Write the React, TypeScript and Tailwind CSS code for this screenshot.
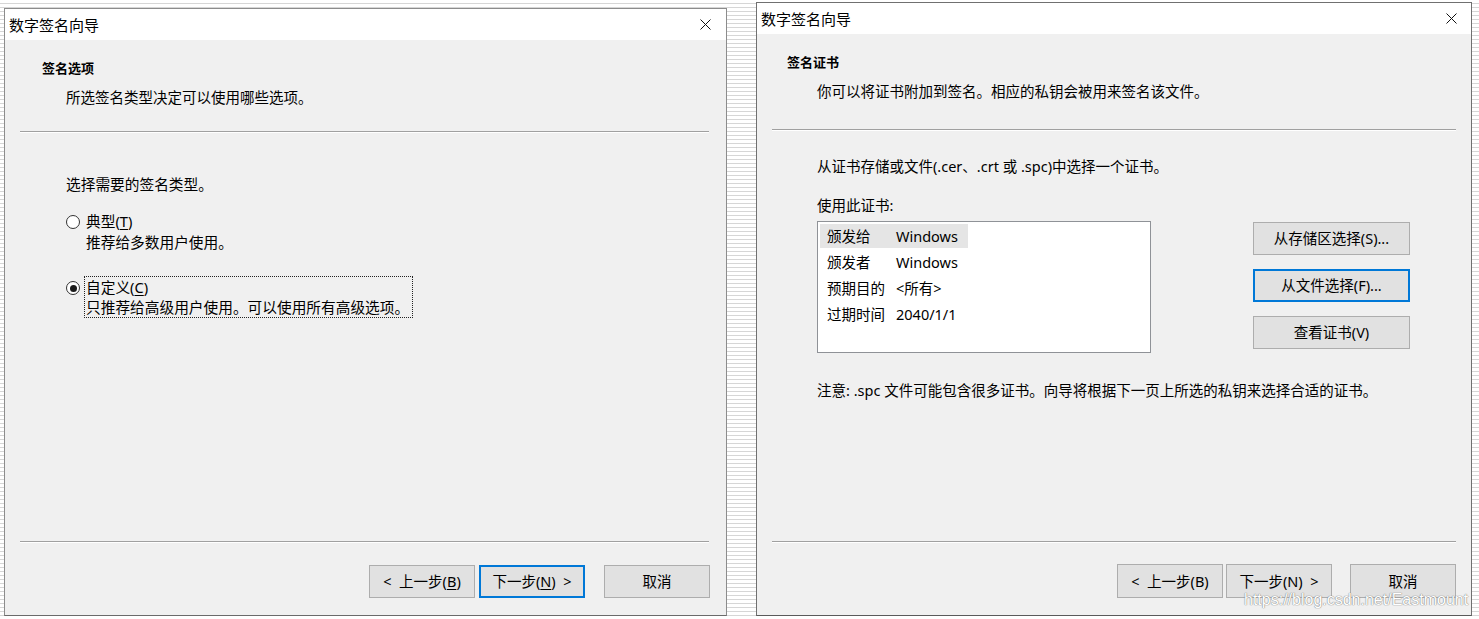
import React from "react";

const FONT = "font-['Noto_Sans','Noto_Sans_CJK_SC',sans-serif]";

const CloseIcon = () => (
  <svg width="11" height="11" viewBox="0 0 11 11" fill="none">
    <path d="M0.5 0.5 L10.5 10.5 M10.5 0.5 L0.5 10.5" stroke="#111" strokeWidth="1" />
  </svg>
);

const Separator = ({ className = "" }: { className?: string }) => (
  <div className={`h-[2px] border-t border-[#a0a0a0] border-b border-b-white ${className}`} />
);

const WinButton = ({
  children,
  focused = false,
  className = "",
}: {
  children: React.ReactNode;
  focused?: boolean;
  className?: string;
}) => (
  <button
    type="button"
    className={`h-[33px] bg-[#e1e1e1] text-[14.5px] leading-none text-black flex items-center justify-center ${
      focused ? "border-2 border-[#0078d7]" : "border border-[#adadad]"
    } ${className}`}
  >
    {children}
  </button>
);

const Radio = ({ checked = false }: { checked?: boolean }) => (
  <span className="mt-[5px] w-[14px] h-[14px] shrink-0 rounded-full border border-[#333] bg-white flex items-center justify-center">
    {checked && <span className="w-[7px] h-[7px] rounded-full bg-[#1a1a1a]" />}
  </span>
);

const TitleBar = ({ pr }: { pr: string }) => (
  <div className={`h-[31px] bg-white flex items-center justify-between pl-[4px] ${pr}`}>
    <span className="text-[15px] leading-[20px] text-black">数字签名向导</span>
    <CloseIcon />
  </div>
);

const certRows = [
  { label: "颁发给", value: "Windows", selected: true },
  { label: "颁发者", value: "Windows" },
  { label: "预期目的", value: "<所有>" },
  { label: "过期时间", value: "2040/1/1" },
];

const SignOptions = () => (
  <div className="w-[723px] h-[608px] border border-[#8c8c8c] border-b-[#6a6a6a] bg-[#f0f0f0] flex flex-col">
    <TitleBar pr="pr-[15px]" />
    <div className="h-[91px] pt-[19px]">
      <div className="pl-[37px] text-[13px] font-bold leading-[18px]">签名选项</div>
      <div className="pl-[61px] mt-[10px] text-[14.5px] leading-[20px]">所选签名类型决定可以使用哪些选项。</div>
    </div>
    <Separator className="ml-[15px] mr-[17px]" />

    <div className="pl-[61px] pt-[41px] text-[14.7px]">
      <div className="leading-[20px]">选择需要的签名类型。</div>

      <div className="mt-[16px] flex items-start gap-[4px]">
        <Radio />
        <div className="border border-transparent pl-px pr-[3px] leading-[21px]">
          <div>
            典型(<span className="underline underline-offset-2">T</span>)
          </div>
          <div>推荐给多数用户使用。</div>
        </div>
      </div>

      <div className="mt-[22px] flex items-start gap-[4px]">
        <Radio checked />
        <div className="border border-dotted border-[#222] pl-px pr-[3px] leading-[20px]">
          <div>
            自定义(<span className="underline underline-offset-2">C</span>)
          </div>
          <div>只推荐给高级用户使用。可以使用所有高级选项。</div>
        </div>
      </div>
    </div>

    <div className="mt-auto">
      <Separator className="ml-[15px] mr-[17px]" />
      <div className="mt-[22px] pb-[17px] pr-[16px] flex justify-end">
        <WinButton className="w-[106px]">
          &lt;&nbsp; 上一步(<span className="underline underline-offset-2">B</span>)
        </WinButton>
        <WinButton focused className="w-[106px] ml-[4px]">
          下一步(<span className="underline underline-offset-2">N</span>)&nbsp; &gt;
        </WinButton>
        <WinButton className="w-[106px] ml-[19px]">取消</WinButton>
      </div>
    </div>
  </div>
);

const SignCertificate = () => (
  <div className="w-[716px] h-[614px] ml-[29px] border border-[#707070] border-b-[#5a5a5a] bg-[#f0f0f0] flex flex-col">
    <TitleBar pr="pr-[14px]" />
    <div className="h-[95px] pt-[19px]">
      <div className="pl-[30px] text-[13px] font-bold leading-[18px]">签名证书</div>
      <div className="pl-[60px] mt-[10px] text-[14.5px] leading-[20px]">
        你可以将证书附加到签名。相应的私钥会被用来签名该文件。
      </div>
    </div>
    <Separator className="mx-[15px]" />

    <div className="pl-[60px] pt-[25px] text-[14.5px] leading-[20px]">
      <div>从证书存储或文件(.cer、.crt 或 .spc)中选择一个证书。</div>
      <div className="mt-[19px]">使用此证书:</div>

      <div className="mt-[6px] flex items-start">
        <div className="w-[334px] h-[132px] bg-white border border-[#8f9297] pt-[2px] pl-[2px]">
          {certRows.map((r) => (
            <div key={r.label} className="h-[26px]">
              <div
                className={`h-[24px] w-[148px] pl-[7px] flex items-center ${
                  r.selected ? "bg-[#e5e5e5]" : ""
                }`}
              >
                <span className="w-[69px] shrink-0">{r.label}</span>
                <span>{r.value}</span>
              </div>
            </div>
          ))}
        </div>
        <div className="ml-[102px] pt-px flex flex-col gap-[14px]">
          <WinButton className="w-[157px]">从存储区选择(S)...</WinButton>
          <WinButton focused className="w-[157px]">
            从文件选择(F)...
          </WinButton>
          <WinButton className="w-[157px]">查看证书(V)</WinButton>
        </div>
      </div>

      <div className="mt-[27px]">注意: .spc 文件可能包含很多证书。向导将根据下一页上所选的私钥来选择合适的证书。</div>
    </div>

    <div className="mt-auto">
      <Separator className="mx-[15px]" />
      <div className="mt-[21px] pb-[17px] pr-[15px] flex justify-end">
        <WinButton className="w-[106px] h-[34px]">&lt;&nbsp; 上一步(B)</WinButton>
        <WinButton className="w-[106px] h-[34px] ml-[3px]">下一步(N)&nbsp; &gt;</WinButton>
        <WinButton className="w-[106px] h-[34px] ml-[18px]">取消</WinButton>
      </div>
    </div>
  </div>
);

export default function App() {
  return (
    <div
      className={`relative w-[1479px] h-[619px] overflow-hidden text-black ${FONT} bg-[repeating-linear-gradient(to_bottom,#ffffff_0px,#ffffff_3px,#d6d6d6_3px,#d6d6d6_4px)] flex items-end pl-[4px] pb-[3px]`}
    >
      <SignOptions />
      <SignCertificate />
      <div className="absolute left-[1244px] top-[589px] text-[16px] leading-[22px] font-['Liberation_Sans',sans-serif] text-white [text-shadow:0_0_1px_#7a7a7a,0_0_1px_#7a7a7a] pointer-events-none">
        https://blog.csdn.net/Eastmount
      </div>
    </div>
  );
}
